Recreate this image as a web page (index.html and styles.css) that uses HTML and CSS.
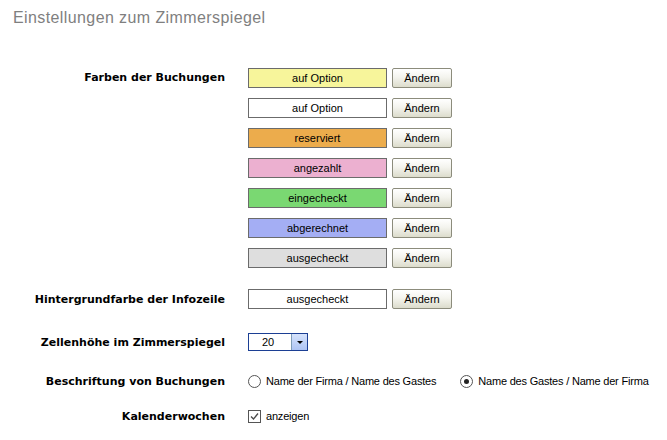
FILE: index.html
```html
<!DOCTYPE html>
<html lang="de">
<head>
  <meta charset="UTF-8">
  <title>Einstellungen zum Zimmerspiegel</title>
  <link rel="stylesheet" href="styles.css">
</head>
<body>

<div id="app">
  <h1 class="title">Einstellungen zum Zimmerspiegel</h1>

  <div class="row row-colors">
    <label class="row-label">Farben der Buchungen</label>
    <div class="color-list">
      <div class="color-item">
        <div class="swatch swatch-option">auf Option</div>
        <button class="btn">Ändern</button>
      </div>
      <div class="color-item">
        <div class="swatch swatch-white">auf Option</div>
        <button class="btn">Ändern</button>
      </div>
      <div class="color-item">
        <div class="swatch swatch-reserved">reserviert</div>
        <button class="btn">Ändern</button>
      </div>
      <div class="color-item">
        <div class="swatch swatch-paid">angezahlt</div>
        <button class="btn">Ändern</button>
      </div>
      <div class="color-item">
        <div class="swatch swatch-checkin">eingecheckt</div>
        <button class="btn">Ändern</button>
      </div>
      <div class="color-item">
        <div class="swatch swatch-billed">abgerechnet</div>
        <button class="btn">Ändern</button>
      </div>
      <div class="color-item">
        <div class="swatch swatch-checkout">ausgecheckt</div>
        <button class="btn">Ändern</button>
      </div>
    </div>
  </div>

  <div class="row row-info">
    <label class="row-label">Hintergrundfarbe der Infozeile</label>
    <div class="color-item">
      <div class="swatch swatch-white">ausgecheckt</div>
      <button class="btn">Ändern</button>
    </div>
  </div>

  <div class="row row-height">
    <label class="row-label">Zellenhöhe im Zimmerspiegel</label>
    <div class="combo">
      <span class="combo-value">20</span>
      <span class="combo-arrow"></span>
    </div>
  </div>

  <div class="row row-caption">
    <label class="row-label">Beschriftung von Buchungen</label>
    <div class="options">
      <span class="option"><span class="radio"></span>Name der Firma / Name des Gastes</span>
      <span class="option"><span class="radio checked"></span>Name des Gastes / Name der Firma</span>
    </div>
  </div>

  <div class="row row-weeks">
    <label class="row-label">Kalenderwochen</label>
    <div class="options">
      <span class="option">
        <span class="checkbox">
          <svg width="9" height="9" viewBox="0 0 9 9"><path d="M1 4.5 L3.5 7 L8 1.5" fill="none" stroke="#4a4a4a" stroke-width="1.3"/></svg>
        </span>anzeigen
      </span>
    </div>
  </div>
</div>

</body>
</html>
```

FILE: styles.css
```css
body {
  margin: 0;
  padding: 0;
  background: #fff;
  font-family: "Liberation Sans", Arial, sans-serif;
  font-size: 11px;
  color: #000;
}

#app {
  display: flex;
  flex-direction: column;
}

.title {
  margin: 9px 0 0 13px;
  font-size: 16px;
  font-weight: normal;
  line-height: 18px;
  letter-spacing: 0.4px;
  color: #7f7f7f;
}

.row {
  display: grid;
  grid-template-columns: 225px auto;
  column-gap: 23px;
  align-items: center;
}

.row-label {
  text-align: right;
  font-family: "DejaVu Sans", Verdana, sans-serif;
  font-weight: bold;
  font-size: 11px;
}

.row-colors {
  margin-top: 41px;
  align-items: start;
}

.row-colors .row-label {
  line-height: 20px;
}

.row-info {
  margin-top: 21px;
}

.row-height {
  margin-top: 24px;
}

.row-caption {
  margin-top: 20px;
}

.row-weeks {
  margin-top: 15px;
}

.color-list {
  display: flex;
  flex-direction: column;
  gap: 10px;
}

.color-item {
  display: flex;
  gap: 5px;
}

.swatch {
  width: 137px;
  height: 18px;
  line-height: 18px;
  border: 1px solid #6b6b6b;
  text-align: center;
}

.swatch-option { background: #f7f59b; }
.swatch-white { background: #fff; }
.swatch-reserved { background: #ecac4c; }
.swatch-paid { background: #ecb0d0; }
.swatch-checkin { background: #7ad872; }
.swatch-billed { background: #a4aef4; }
.swatch-checkout { background: #dedede; }

.btn {
  width: 60px;
  height: 20px;
  padding: 0;
  border: 1px solid #8c8c7c;
  border-radius: 2px;
  background: linear-gradient(#ffffff, #f4f4ee 45%, #dcdccc);
  font-family: "Liberation Sans", Arial, sans-serif;
  font-size: 11px;
  color: #000;
}

.combo {
  display: flex;
  width: 58px;
  height: 16px;
  border: 1px solid #1c3f94;
}

.combo-value {
  flex: 1;
  text-align: center;
  line-height: 16px;
  padding-right: 4px;
}

.combo-arrow {
  width: 15px;
  border-left: 1px solid #7f9db9;
  background: linear-gradient(#d6e3fc, #aec4f4);
  display: flex;
  align-items: center;
  justify-content: center;
}

.combo-arrow::after {
  content: "";
  border-left: 3px solid transparent;
  border-right: 3px solid transparent;
  border-top: 3px solid #000;
}

.options {
  display: flex;
  gap: 24px;
  align-items: center;
}

.option {
  display: flex;
  align-items: center;
  gap: 5px;
  line-height: 20px;
  letter-spacing: -0.2px;
}

.radio {
  width: 11px;
  height: 11px;
  border: 1px solid #555;
  border-radius: 50%;
  background: #fff;
  display: flex;
  align-items: center;
  justify-content: center;
}

.radio.checked::after {
  content: "";
  width: 5px;
  height: 5px;
  border-radius: 50%;
  background: #222;
}

.checkbox {
  width: 11px;
  height: 11px;
  border: 1px solid #555;
  background: #fff;
  display: flex;
  align-items: center;
  justify-content: center;
}
```
